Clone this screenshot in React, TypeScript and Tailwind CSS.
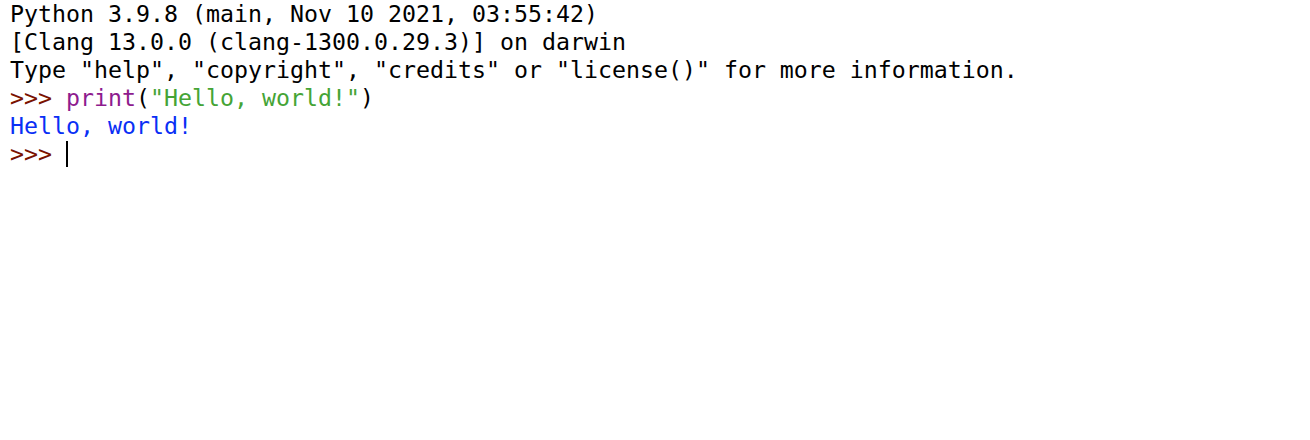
import React from 'react'

const App = () => {
    return (
        <div className="w-[1310px] h-[440px] bg-white pl-[10px] font-['DejaVu_Sans_Mono',Menlo,monospace] text-[23.25px] leading-[28px] text-black whitespace-pre">
            <div>Python 3.9.8 (main, Nov 10 2021, 03:55:42)</div>
            <div>[Clang 13.0.0 (clang-1300.0.29.3)] on darwin</div>
            <div>Type "help", "copyright", "credits" or "license()" for more information.</div>
            <div>
                <span className="text-[#7a1200]">&gt;&gt;&gt; </span>
                <span className="text-[#8e1b8e]">print</span>
                (<span className="text-[#45a436]">"Hello, world!"</span>)
            </div>
            <div className="text-[#0a2ff5]">Hello, world!</div>
            <div className="flex items-center">
                <span className="text-[#7a1200]">&gt;&gt;&gt; </span>
                <span className="inline-block w-[2px] h-[26px] bg-black"></span>
            </div>
        </div>
    )
}

export default App
